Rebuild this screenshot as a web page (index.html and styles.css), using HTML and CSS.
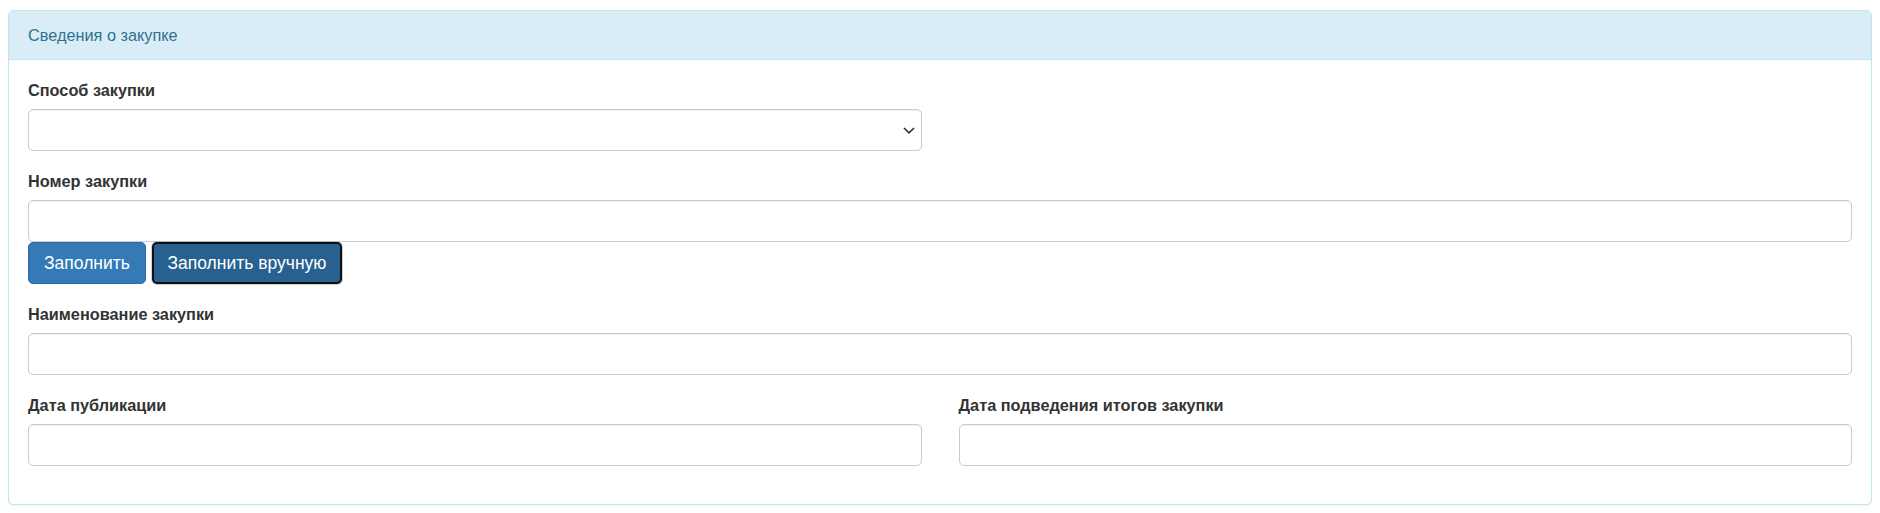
FILE: index.html
```html
<!DOCTYPE html>
<html lang="ru">
<head>
<meta charset="utf-8">
<title>Сведения о закупке</title>
<link rel="stylesheet" href="styles.css">
</head>
<body>
<div class="page">
  <section class="panel">
    <header class="panel-heading">Сведения о закупке</header>
    <div class="panel-body">
      <div class="grid-2">
        <div class="form-group">
          <label class="control-label">Способ закупки</label>
          <div class="select-wrap">
            <select class="form-control select"><option></option></select>
            <svg class="chevron" width="12" height="7" viewBox="0 0 12 7" aria-hidden="true"><polyline points="1,1 6,5.8 11,1" fill="none" stroke="#333" stroke-width="1.7"/></svg>
          </div>
        </div>
      </div>
      <div class="form-group">
        <label class="control-label">Номер закупки</label>
        <input class="form-control" type="text">
        <div class="btn-row">
          <button class="btn btn-primary" type="button">Заполнить</button>
          <button class="btn btn-primary btn-focused" type="button">Заполнить вручную</button>
        </div>
      </div>
      <div class="form-group">
        <label class="control-label">Наименование закупки</label>
        <input class="form-control" type="text">
      </div>
      <div class="grid-2">
        <div class="form-group">
          <label class="control-label">Дата публикации</label>
          <input class="form-control" type="text">
        </div>
        <div class="form-group">
          <label class="control-label">Дата подведения итогов закупки</label>
          <input class="form-control" type="text">
        </div>
      </div>
    </div>
  </section>
</div>
</body>
</html>
```
FILE: styles.css
```css
* { box-sizing: border-box; }
html, body { margin: 0; padding: 0; background: #fff; }
body {
  font-family: "Liberation Sans", Arial, sans-serif;
  font-size: 16.3px;
  line-height: 24px;
  color: #333;
}
.page { padding: 10px 8px 8px; }
.panel {
  background: #fff;
  border: 1px solid #bce8f1;
  border-radius: 5px;
  box-shadow: 0 1px 1px rgba(0,0,0,0.05);
}
.panel-heading {
  background: #d9edf7;
  color: #31708f;
  border-bottom: 1px solid #bce8f1;
  border-radius: 4px 4px 0 0;
  padding: 12px 19px 12px;
  line-height: 24px;
}
.panel-body { padding: 18px 19px 20px; }
.grid-2 {
  display: grid;
  grid-template-columns: 1fr 1fr;
  column-gap: 37px;
}
.form-group { margin-bottom: 18px; }
.control-label {
  display: block;
  font-weight: 700;
  margin-bottom: 7px;
  line-height: 24px;
}
.form-control {
  display: block;
  width: 100%;
  height: 42px;
  padding: 7px 14px;
  font: inherit;
  color: #555;
  background: #fff;
  border: 1px solid #ccc;
  border-radius: 5px;
  box-shadow: inset 0 1px 1px rgba(0,0,0,0.075);
  outline: none;
}
.select-wrap { position: relative; }
.select { appearance: none; -webkit-appearance: none; padding-right: 30px; }
.chevron {
  position: absolute;
  right: 7px;
  top: 18px;
  pointer-events: none;
}
.btn-row { display: flex; gap: 5px; align-items: flex-start; }
.btn {
  font-family: inherit;
  font-size: 17.5px;
  line-height: 24px;
  height: 42px;
  padding: 8px 15px;
  border: 1px solid transparent;
  border-radius: 5px;
  cursor: pointer;
}
.btn-primary {
  color: #fff;
  background: #337ab7;
  border-color: #2e6da4;
}
.btn-focused {
  background: #286090;
  border: 2.5px solid #101010;
  padding: 6.5px 13.5px;
  margin-left: 1px;
  box-shadow: 0 0 0 1px rgba(150,150,150,0.45);
}
```
